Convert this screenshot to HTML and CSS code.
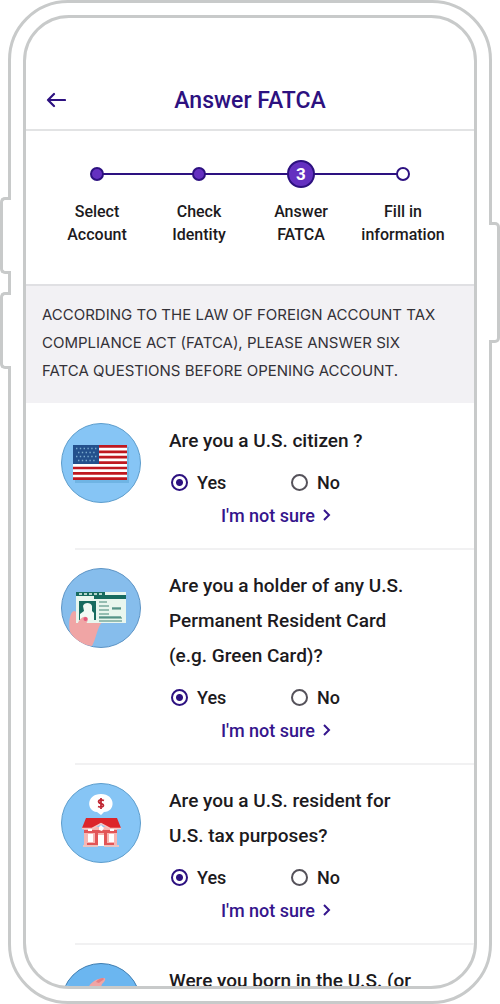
FILE: index.html
```html
<!DOCTYPE html>
<html lang="en">
<head>
  <meta charset="UTF-8">
  <meta name="viewport" content="width=device-width, initial-scale=1.0">
  <title>Answer FATCA</title>
  <link rel="stylesheet" href="styles.css">
</head>
<body>
  <div class="phone">
    <span class="side-button volume-up"></span>
    <span class="side-button volume-down"></span>
    <span class="side-button power"></span>

    <div class="screen">
      <header class="header">
        <button class="back" aria-label="Back">
          <svg width="20" height="16" viewBox="0 0 20 16" fill="none" stroke="currentColor" stroke-width="2.2" stroke-linecap="round" stroke-linejoin="round">
            <path d="M19 8H2M8 2L2 8l6 6"/>
          </svg>
        </button>
        <h1>Answer FATCA</h1>
      </header>

      <ol class="steps">
        <li class="step done"><span class="dot"></span>Select<br>Account</li>
        <li class="step done"><span class="dot"></span>Check<br>Identity</li>
        <li class="step current"><span class="dot">3</span>Answer<br>FATCA</li>
        <li class="step"><span class="dot"></span>Fill in<br>information</li>
      </ol>

      <p class="notice">ACCORDING TO THE LAW OF FOREIGN ACCOUNT TAX<br>COMPLIANCE ACT (FATCA), PLEASE ANSWER SIX<br>FATCA QUESTIONS BEFORE OPENING ACCOUNT.</p>

      <section class="question">
        <svg class="picture" width="80" height="80" viewBox="0 0 80 80">
          <circle cx="40" cy="40" r="39.5" fill="#86c5f5" stroke="#5d9dcc"/>
          <path fill="#6fb4e4" d="M14 24h54v36H14z"/>
          <path fill="#fff" d="M12 22h54v35H12z"/>
          <path stroke="#bf1820" stroke-width="2.7" d="M12 23.4h54M12 28.8h54M12 34.2h54M12 39.6h54M12 45h54M12 50.4h54M12 55.6h54"/>
          <path fill="#23508c" d="M12 22h26v19H12z"/>
          <path stroke="#79aacd" stroke-width="1.4" stroke-dasharray="1.4 2.4" d="M15 25.500h21M17 29.500h19M15 33.500h21M17 37.500h19"/>
        </svg>
        <fieldset class="body">
          <legend>Are you a U.S. citizen ?</legend>
          <div class="options">
            <label><input type="radio" name="citizen" checked>Yes</label>
            <label><input type="radio" name="citizen">No</label>
          </div>
          <a href="#" class="not-sure">I'm not sure
            <svg width="9" height="12" viewBox="0 0 9 12" fill="none" stroke="currentColor" stroke-width="2"><path d="M2 1l5 5-5 5"/></svg>
          </a>
        </fieldset>
      </section>

      <section class="question">
        <svg class="picture" width="80" height="80" viewBox="0 0 80 80">
          <circle cx="40" cy="40" r="39.5" fill="#86bdec" stroke="#5d94c5"/>
          <path fill="#f0a5a5" d="M9 64C7 54 9 44 13 43c3 0 4 4 5 10l6-5c4-3 6 0 4 5l13 1c-5 6-6 17-10 24C22 77 13 71 9 64z"/>
          <path fill="#e9f6ee" d="M15 24h50v31H15z"/>
          <path fill="#176b5f" d="M15 24h29v4H15zM33 27h32v4H33z"/>
          <path stroke="#e9f6ee" stroke-width="1.500" stroke-dasharray="3 2" d="M18 26h24"/>
          <path fill="#176b5f" d="M18 33h17v19H18z"/>
          <path fill="#f2faf5" d="M22 38c1-4 8-4 9 0v5l2 2v7H19v-6l4-3z"/>
          <path fill="none" stroke="#79aa9d" stroke-width="1.500" d="M38 34h8M38 38h10M38 42h10M38 46h10M38 50h23M51 41h9M38 53h23"/>
          <path fill="none" stroke="#176b5f" d="M51 40h9M38 49h22"/>
          <path fill="#f0a5a5" d="M16 58c1-5 5-10 9-9 4 1 1 6-3 11z"/>
          <circle cx="24.500" cy="51" r="2" fill="#e5577b"/>
        </svg>
        <fieldset class="body">
          <legend>Are you a holder of any U.S.<br>Permanent Resident Card<br>(e.g. Green Card)?</legend>
          <div class="options">
            <label><input type="radio" name="resident-card" checked>Yes</label>
            <label><input type="radio" name="resident-card">No</label>
          </div>
          <a href="#" class="not-sure">I'm not sure
            <svg width="9" height="12" viewBox="0 0 9 12" fill="none" stroke="currentColor" stroke-width="2"><path d="M2 1l5 5-5 5"/></svg>
          </a>
        </fieldset>
      </section>

      <section class="question">
        <svg class="picture" width="80" height="80" viewBox="0 0 80 80">
          <circle cx="40" cy="40" r="39.5" fill="#86c5f5" stroke="#5d9dcc"/>
          <path fill="#fff" d="M40 11c15 0 15 18 3 18l-3 3-4-3c-11-1-11-18 4-18z"/>
          <path fill="none" stroke="#c02733" stroke-width="1.800" d="M43 17.500c-6-2-7 2-3 3s3 5-3 3M40 15v11"/>
          <path fill="#f7b6b3" d="M23 44h33v19H23z"/>
          <path fill="#e25557" d="M23 47h33v3H23zM26 60h27v3H26zM34 47h3v14h-3zM43 47h3v14h-3z"/>
          <path fill="#dc252a" d="M25 35h31l4 10H48l-8-5-8 5H21z"/>
          <path fill="none" stroke="#f5c5c1" stroke-width="1.500" d="M21 45.500h10l9-5 9 5h11"/>
          <path fill="#fff" d="M27 51h5v8h-5zM37 52h6v11h-6zM48 51h5v8h-5zM38 44l2-2 3 3-2 3-3-1z"/>
          <path fill="#fff" d="M27 46h4v2h-4zM49 46h4v2h-4z"/>
          <path fill="#eac3c1" d="M22 62h15v2H22zM43 62h15v2H43z"/>
        </svg>
        <fieldset class="body">
          <legend>Are you a U.S. resident for<br>U.S. tax purposes?</legend>
          <div class="options">
            <label><input type="radio" name="tax-resident" checked>Yes</label>
            <label><input type="radio" name="tax-resident">No</label>
          </div>
          <a href="#" class="not-sure">I'm not sure
            <svg width="9" height="12" viewBox="0 0 9 12" fill="none" stroke="currentColor" stroke-width="2"><path d="M2 1l5 5-5 5"/></svg>
          </a>
        </fieldset>
      </section>

      <section class="question">
        <svg class="picture" width="80" height="80" viewBox="0 0 80 80">
          <circle cx="40" cy="40" r="39.5" fill="#6bb6f0" stroke="#3f7db0"/>
          <path fill="#f0a5a5" d="M27 26c1-5 7-10 15-11 4 0 2 3-1 6l-3 9H28z"/>
          <path fill="#e77f83" d="M35 19c2-3 5-4 7-4 3 1-2 3-4 5z"/>
        </svg>
        <fieldset class="body">
          <legend>Were you born in the U.S. (or</legend>
        </fieldset>
      </section>
    </div>
  </div>
</body>
</html>
```
FILE: styles.css
```css
* {
  box-sizing: border-box;
}
body {
  margin: 0;
  font-family: Roboto, "Liberation Sans", sans-serif;
  background-color: #fff;
  color: #1c1a20;
}

/* Phone frame */
.phone {
  position: relative;
  display: flex;
  height: 100vh;
  margin: 0 8px;
  padding: 12px;
  border: 3px solid #c8caca;
  border-radius: 60px;
}
.screen {
  flex: 1;
  min-width: 0;
  overflow: hidden;
  border: 3px solid #c8caca;
  border-radius: 46px;
}
.side-button {
  position: absolute;
  width: 11px;
  background-color: #fff;
  border: 3px solid #c8caca;
}
.volume-up,
.volume-down {
  left: -11px;
  height: 77px;
  border-right: none;
  border-radius: 5px 0 0 5px;
}
.volume-up {
  top: 194px;
}
.volume-down {
  top: 289px;
}
.power {
  top: 219px;
  right: -11px;
  height: 121px;
  border-left: none;
  border-radius: 0 5px 5px 0;
}

.header {
  display: grid;
  grid-template-columns: 60px 1fr 60px;
  align-items: center;
  padding-top: 53px;
  height: 113px;
  border-bottom: 2px solid #e2e3e4;
}
.back {
  display: flex;
  justify-content: center;
  padding: 0;
  border: none;
  background: none;
  color: #2d1180;
  cursor: pointer;
}
h1 {
  margin: 0;
  font-size: 23px;
  font-weight: 500;
  text-align: center;
  color: #2d1180;
}

/* Progress steps */
.steps {
  display: grid;
  grid-template-columns: repeat(4, 1fr);
  margin: 0;
  padding: 28px 20px 38px;
  list-style: none;
  border-bottom: 2px solid #e0e0e3;
}
.step {
  position: relative;
  display: block;
  font-size: 16px;
  font-weight: 500;
  line-height: 23px;
  text-align: center;
}
.step + .step::before {
  content: "";
  position: absolute;
  top: 14px;
  right: 50%;
  width: 100%;
  height: 2px;
  background-color: #2d1180;
}
.dot {
  position: relative;
  z-index: 1;
  display: block;
  width: 14px;
  height: 14px;
  margin: 8px auto 19px;
  border: 2px solid #2d1180;
  border-radius: 50%;
  background-color: #fff;
}
.done .dot {
  background-color: #6430c0;
}
.current .dot {
  width: 28px;
  height: 28px;
  margin: 1px auto 12px;
  background-color: #6430c0;
  color: #fff;
  font-size: 17px;
  font-weight: bold;
  line-height: 24px;
}

.notice {
  margin: 0 0 2px;
  padding: 15px 16px 18px;
  background-color: #f2f1f4;
  color: #343238;
  font-family: Inter, "Liberation Sans", sans-serif;
  font-size: 15px;
  line-height: 28px;
  white-space: nowrap;
}

/* Questions */
.question {
  display: grid;
  grid-template-columns: 80px 1fr;
  column-gap: 28px;
  padding: 18px 0 0 35px;
}
.question::after {
  content: "";
  grid-column: 1 / 3;
  height: 2px;
  margin: 17px 0 0 14px;
  background-color: #f1f1f2;
}
.body {
  min-width: 0;
  margin: 0;
  padding: 0;
  border: none;
}
legend {
  padding: 0;
  font-size: 19px;
  font-weight: 500;
  line-height: 35px;
  white-space: nowrap;
}
.options {
  display: grid;
  grid-template-columns: 120px 1fr;
  margin-top: 8px;
}
label {
  display: flex;
  align-items: center;
  gap: 9px;
  height: 33px;
  font-size: 18px;
  font-weight: 500;
}
input {
  appearance: none;
  width: 17px;
  height: 17px;
  margin: 0 0 0 2px;
  border: 2px solid #55525a;
  border-radius: 50%;
}
input:checked {
  border-color: #2d1180;
  background: radial-gradient(circle, #2d1180 3px, #fff 4px);
}
.not-sure {
  display: flex;
  align-items: center;
  gap: 7px;
  height: 32px;
  margin-left: 52px;
  color: #35158c;
  font-size: 18px;
  font-weight: 500;
  text-decoration: none;
}
```
